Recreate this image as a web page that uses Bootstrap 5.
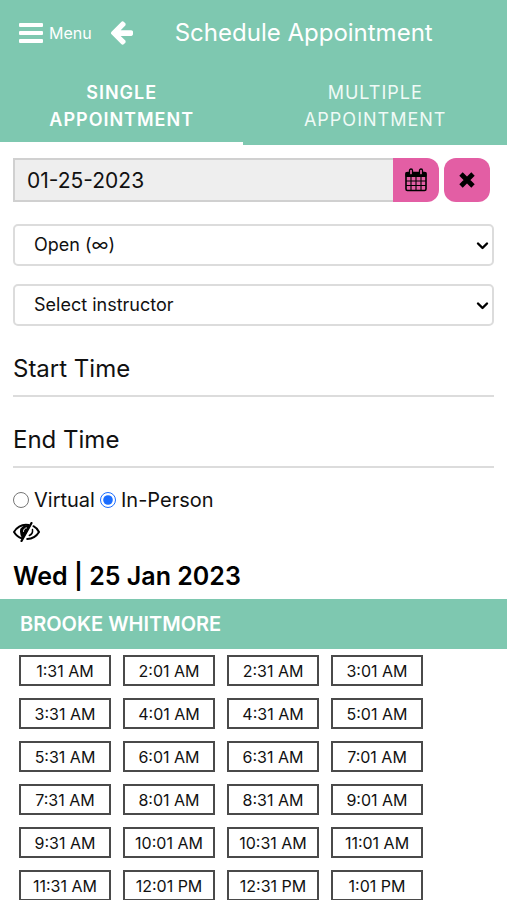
<!DOCTYPE html>
<html lang="en">
<head>
<meta charset="utf-8">
<meta name="viewport" content="width=device-width, initial-scale=1">
<title>Schedule Appointment</title>
<link rel="stylesheet" href="https://cdn.jsdelivr.net/npm/bootstrap@5.3.0/dist/css/bootstrap.min.css">
<style>
  :root { --mint: #7ec8b0; --pink: #e35ea4; --line: #dcdcdc; }
  body { font-family: Inter, "Open Sans", sans-serif; color: #111; }
  svg { display: block; flex: none; }
  .mint { background: var(--mint); color: #fff; }
  .topbar { height: 66px; padding: 0 20px 0 19px; }
  .topbar button { padding: 0; border: 0; background: none; color: #fff; }
  .menu-btn { gap: 6px; font-size: 16px; line-height: 20px; }
  .back-btn { margin-left: 18px; }
  .page-title { font-size: 24px; line-height: 32px; font-weight: 400; padding-left: 42px; }
  .tab-link { padding: 13px 24px 9px; border-bottom: 3px solid transparent; color: #effaf6; font-size: 18px; line-height: 27px; letter-spacing: 1px; text-transform: uppercase; text-align: center; text-decoration: none; }
  .tab-link.active { flex: 0 0 48%; color: #fff; font-weight: 600; border-color: #fff; }
  .form-area { padding: 13px 13px 0; }
  .date-row { gap: 5px; padding-right: 4px; }
  .date-box { height: 44px; border: 2px solid #d0d0d0; border-right: 0; border-radius: 0; background: #eee; color: #111; font-size: 21px; line-height: 28px; padding: 0 12px; }
  .pink-btn { width: 46px; height: 44px; background: var(--pink); border: 0; border-radius: 12px; padding: 0; color: #000; }
  .pink-btn.joined { border-radius: 0 12px 12px 0; }
  .pick { height: 42px; border: 2px solid var(--line); border-radius: 5px; color: #111; font-size: 18px; line-height: 24px; padding: 0 40px 0 19px; background-position: right 3px center; background-size: 13px 13px;
    background-image: url("data:image/svg+xml,%3csvg xmlns='http://www.w3.org/2000/svg' viewBox='0 0 13 13'%3e%3cpath d='M2 4.5l4.5 4.5L11 4.5' fill='none' stroke='%23000' stroke-width='2.4' stroke-linecap='round' stroke-linejoin='round'/%3e%3c/svg%3e"); }
  .picks { gap: 18px; padding-top: 22px; }
  .time-box { height: 53px; border: 0; border-bottom: 2px solid var(--line); border-radius: 0; padding: 0 0 2px; color: #111; font-size: 24px; line-height: 30px; }
  .time-box::placeholder { color: #111; opacity: 1; }
  .times { gap: 18px; padding-top: 18px; }
  .mode { gap: 5px; padding-top: 19px; font-size: 20px; line-height: 26px; }
  .mode label { gap: 5px; }
  .mode input { width: 16px; height: 16px; margin: 0; accent-color: #1a6dff; }
  .eye-btn { padding: 0; border: 0; background: none; margin-top: 9px; color: #000; }
  .day { font-size: 25px; line-height: 30px; font-weight: 600; margin: 13px 0 8px; color: #000; }
  .teacher { font-size: 20px; line-height: 26px; font-weight: 600; padding: 12px 20px; margin: 0; }
  .slots { gap: 12px; padding: 6px 19px 0; }
  .slot { width: 92px; height: 31px; border: 2px solid #4a4a4a; background: #fff; color: #111; font-size: 16px; line-height: 20px; padding: 0; white-space: nowrap; }
  .slot-wrap { max-width: 450px; }
</style>
</head>
<body>
<header class="mint">
  <div class="topbar d-flex align-items-center">
    <button type="button" class="menu-btn d-flex align-items-center">
      <svg width="24" height="20" viewBox="0 0 24 20" fill="currentColor" aria-hidden="true"><rect y="0" width="24" height="4" rx="1"/><rect y="8" width="24" height="4" rx="1"/><rect y="16" width="24" height="4" rx="1"/></svg>
      <span>Menu</span>
    </button>
    <button type="button" class="back-btn" aria-label="Back">
      <svg width="23" height="24" viewBox="0 -96 1536 1600" fill="currentColor"><path d="M1536 640v128q0 53-32.5 90.5t-84.500 37.500h-704l293 294q38 36 38 90t-38 90l-75 76q-37 37-90 37-52 0-91-37l-651-652q-37-37-37-90 0-52 37-91l651-650q38-38 91-38 52 0 90 38l75 74q38 38 38 91t-38 91l-293 293h704q52 0 84.500 37.500t32.500 90.500z"/></svg>
    </button>
    <h1 class="page-title mb-0">Schedule Appointment</h1>
  </div>
  <nav class="d-flex" aria-label="Appointment type">
    <a href="#" class="tab-link active" aria-current="page">Single Appointment</a>
    <a href="#" class="tab-link flex-fill">Multiple<br>Appointment</a>
  </nav>
</header>

<main>
  <form class="form-area">
    <div class="date-row d-flex">
      <div class="d-flex flex-grow-1">
        <input type="text" class="form-control date-box" value="01-25-2023" aria-label="Date" readonly>
        <button type="button" class="pink-btn joined d-flex flex-shrink-0 align-items-center justify-content-center" aria-label="Open calendar">
          <svg width="22" height="24" viewBox="0 0 22 24" fill="none" stroke="#000"><rect x="1" y="4.500" width="20" height="18" rx="1.500" stroke-width="1.600"/><path d="M1 4.500h20v4H1z" fill="#000"/><path d="M6 8v14M11 8v14M16 8v14M1 13h20M1 17.500h20" stroke-width="1.100"/><rect x="4.500" y="1" width="3" height="6" rx="1.500" fill="#e35ea4" stroke-width="1.300"/><rect x="14.500" y="1" width="3" height="6" rx="1.500" fill="#e35ea4" stroke-width="1.300"/></svg>
        </button>
      </div>
      <button type="button" class="pink-btn d-flex flex-shrink-0 align-items-center justify-content-center" aria-label="Clear date">
        <svg width="16" height="16" viewBox="0 0 16 16" fill="none" stroke="#000" stroke-width="4.800"><path d="M2 2l12 12M14 2L2 14"/></svg>
      </button>
    </div>
    <div class="picks d-flex flex-column">
      <select class="form-select pick" aria-label="Appointment status"><option>Open (∞)</option></select>
      <select class="form-select pick" aria-label="Instructor"><option>Select instructor</option></select>
    </div>
    <div class="times d-flex flex-column">
      <input type="text" class="form-control time-box" placeholder="Start Time" aria-label="Start Time">
      <input type="text" class="form-control time-box" placeholder="End Time" aria-label="End Time">
    </div>
    <div class="mode d-flex">
      <label class="d-flex align-items-center"><input type="radio" name="mode">Virtual</label>
      <label class="d-flex align-items-center"><input type="radio" name="mode" checked>In-Person</label>
    </div>
    <button type="button" class="eye-btn" aria-label="Toggle hidden slots">
      <svg width="27" height="20" viewBox="0 0 27 20" fill="none" stroke="#000" stroke-width="2" stroke-linecap="round"><path d="M18.500 1L8.500 19" stroke-width="2.200"/><path d="M15.800 3.100C9.500 2 4.500 4.500 1 10c2 3.200 4.500 5.300 7.600 6.200"/><path d="M16 4.500c-5-.8-8 1.500-8 4.900 0 2 .8 4.200 1.800 6z" fill="#000"/><path d="M10.500 9.400c0-2 1.100-3.300 3-3.500" stroke="#fff" stroke-width="1"/><path d="M20.500 4.200C23 5.500 24.800 7.400 26 10c-2.600 4.400-6.300 6.900-11.800 6.900"/><path d="M19.500 7.500c.4 2.800-.8 5-3.200 6" stroke-width="1.500"/></svg>
    </button>
    <h2 class="day">Wed | 25 Jan 2023</h2>
  </form>
  <h3 class="mint teacher text-uppercase">Brooke Whitmore</h3>
  <div class="slots slot-wrap d-flex flex-wrap">
    <button type="button" class="slot">1:31 AM</button><button type="button" class="slot">2:01 AM</button><button type="button" class="slot">2:31 AM</button><button type="button" class="slot">3:01 AM</button>
    <button type="button" class="slot">3:31 AM</button><button type="button" class="slot">4:01 AM</button><button type="button" class="slot">4:31 AM</button><button type="button" class="slot">5:01 AM</button>
    <button type="button" class="slot">5:31 AM</button><button type="button" class="slot">6:01 AM</button><button type="button" class="slot">6:31 AM</button><button type="button" class="slot">7:01 AM</button>
    <button type="button" class="slot">7:31 AM</button><button type="button" class="slot">8:01 AM</button><button type="button" class="slot">8:31 AM</button><button type="button" class="slot">9:01 AM</button>
    <button type="button" class="slot">9:31 AM</button><button type="button" class="slot">10:01 AM</button><button type="button" class="slot">10:31 AM</button><button type="button" class="slot">11:01 AM</button>
    <button type="button" class="slot">11:31 AM</button><button type="button" class="slot">12:01 PM</button><button type="button" class="slot">12:31 PM</button><button type="button" class="slot">1:01 PM</button>
  </div>
</main>
<script src="https://cdn.jsdelivr.net/npm/bootstrap@5.3.0/dist/js/bootstrap.bundle.min.js"></script>
</body>
</html>
